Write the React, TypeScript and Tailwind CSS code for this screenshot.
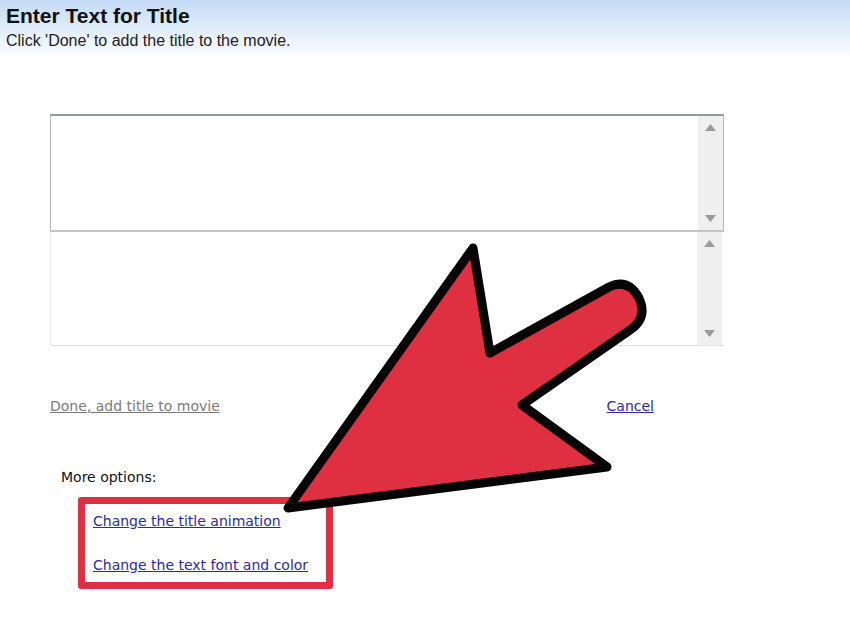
import React from 'react';

const ScrollTrack = () => (
  <div className="w-[25px] bg-[#efefef] flex flex-col justify-between items-center py-[8px]">
    <svg width="11" height="7" viewBox="0 0 11 7">
      <path d="M5.5 0 L11 7 L0 7 Z" fill="#9a9a9a" />
    </svg>
    <svg width="11" height="7" viewBox="0 0 11 7">
      <path d="M0 0 L11 0 L5.5 7 Z" fill="#9a9a9a" />
    </svg>
  </div>
);

const Arrow = () => (
  <svg className="absolute left-0 top-0 pointer-events-none" width="850" height="638" viewBox="0 0 850 638">
    <path
      d="M288 508 L473 248 L490 353 L609 287 Q628 278 639 298 Q648 318 630 330 L522 405 L607 467 Z"
      fill="#de3040"
      stroke="#050505"
      strokeWidth="9"
      strokeLinejoin="round"
    />
  </svg>
);

export default function App() {
  return (
    <div className="relative w-[850px] h-[638px] bg-white overflow-hidden" style={{ fontFamily: '"Liberation Sans", Arial, sans-serif' }}>
      {/* header */}
      <div className="h-[60px] px-[6px] pt-[3px] bg-gradient-to-b from-[#c4dbf4] to-white">
        <div className="text-[21px] font-bold leading-[25px] text-[#111]">Enter Text for Title</div>
        <div className="text-[16px] leading-[26px] text-[#222]">Click 'Done' to add the title to the movie.</div>
      </div>

      {/* text boxes */}
      <div className="ml-[50px] mt-[54px] w-[674px]">
        <div className="h-[118px] flex border border-[#b4b9b8] border-t-[2px] border-t-[#8e9b9a] border-b-[2px] border-b-[#c4c4c4]">
          <div className="flex-1 bg-white" />
          <ScrollTrack />
        </div>
        <div className="h-[114px] flex border-l border-l-[#e4e4e4] border-b border-b-[#e2e2e2] pr-[2px]">
          <div className="flex-1 bg-white" />
          <ScrollTrack />
        </div>
      </div>

      {/* action links */}
      <div className="flex justify-between ml-[50px] w-[604px] mt-[50px]" style={{ fontFamily: '"DejaVu Sans", Tahoma, sans-serif' }}>
        <span className="text-[14px] text-[#7b7b7b] underline">Done, add title to movie</span>
        <span className="text-[14px] text-[#2a2aa6] underline">Cancel</span>
      </div>

      {/* more options */}
      <div className="ml-[61px] mt-[50px]" style={{ fontFamily: '"DejaVu Sans", Tahoma, sans-serif' }}>
        <div className="text-[14px] text-[#111]">More options:</div>
        <div className="ml-[17px] mt-[9px] w-[255px] h-[92px] border-[7px] border-[#de3040] rounded-[3px] pl-[8px] pt-[9px] flex flex-col gap-[27px]">
          <span className="text-[14px] text-[#2a2aa6] underline leading-[17px]">Change the title animation</span>
          <span className="text-[14px] text-[#2a2aa6] underline leading-[17px]">Change the text font and color</span>
        </div>
      </div>

      <Arrow />
    </div>
  );
}
